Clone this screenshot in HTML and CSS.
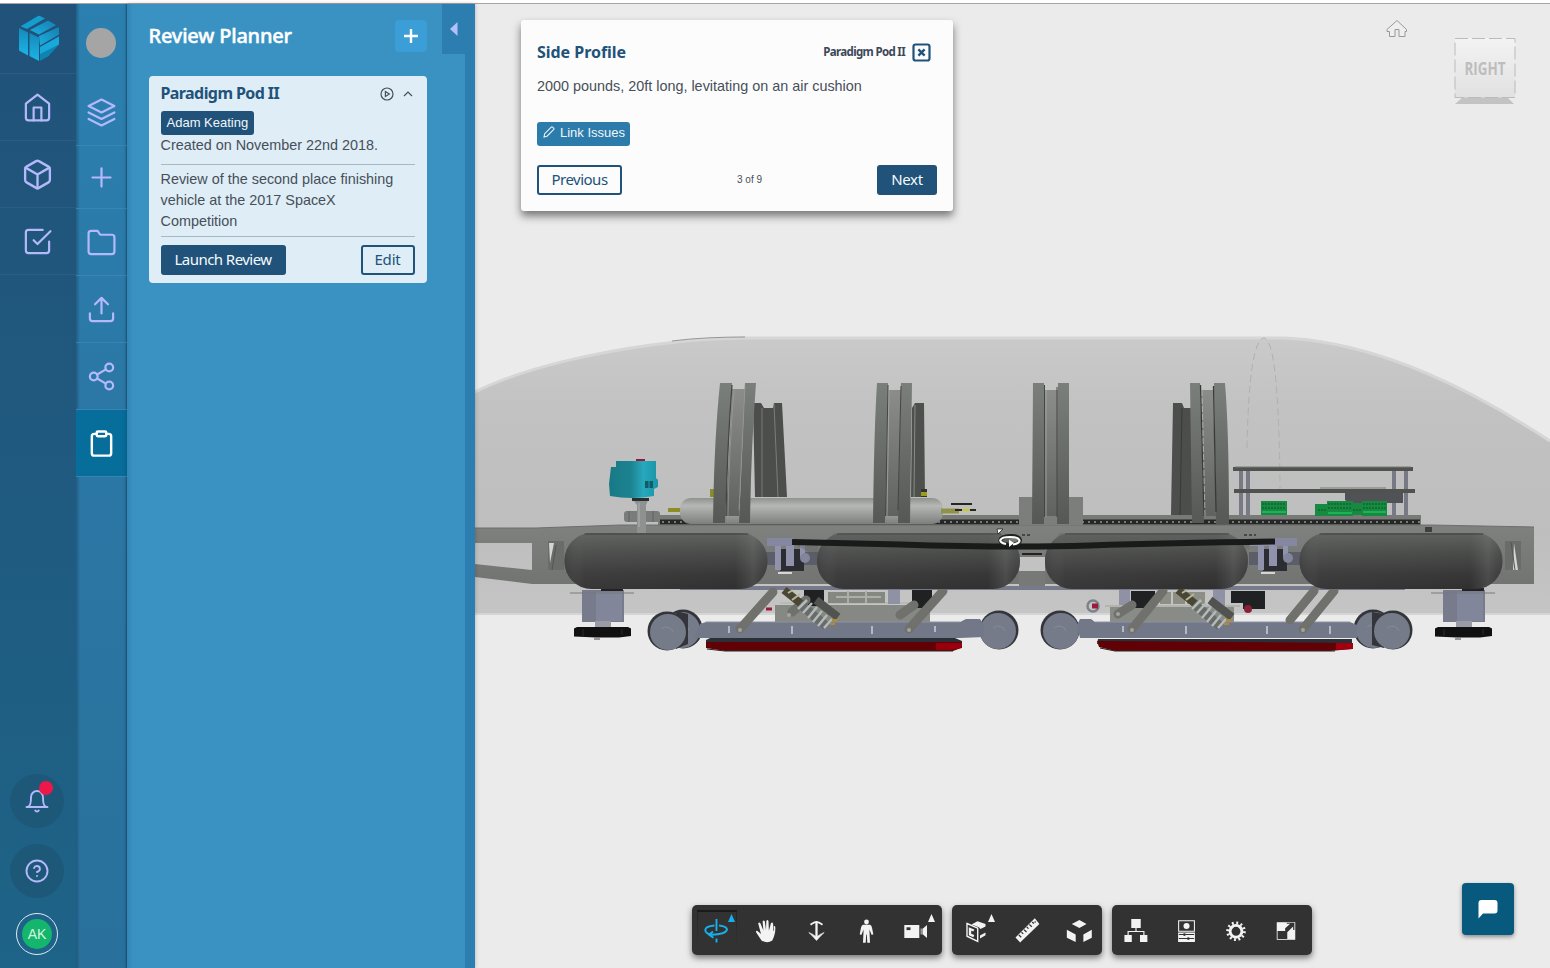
FILE: index.html
```html
<!DOCTYPE html>
<html lang="en">
<head>
<meta charset="utf-8">
<title>Review Planner</title>
<link rel="stylesheet" href="styles.css">
</head>
<body>
<div class="topline"></div>
<div class="app">
  <nav class="rail">
    <a class="logo">
      <svg width="42" height="47" viewBox="0 0 42 47">
        <defs>
          <linearGradient id="lg1" x1="0" y1="1" x2="1" y2="0"><stop offset="0" stop-color="#1caee0"/><stop offset="1" stop-color="#1380b0"/></linearGradient>
          <linearGradient id="lg2" x1="0" y1="0" x2="0" y2="1"><stop offset="0" stop-color="#1589b8"/><stop offset="1" stop-color="#1bb5e8"/></linearGradient>
        </defs>
        <path d="M3 11L20 1Q21 .5 22 1L27 3.500 9 14 3 11.500Z" fill="#159dcd"/>
        <path d="M12 15L30 5.500L38 10L21 19.500Z" fill="url(#lg1)"/>
        <path d="M1 13L10 17.500V40.500L1 35.500Z" fill="url(#lg2)"/>
        <path d="M11.500 18L21 22.500V46L11.500 41Z" fill="url(#lg2)"/>
        <path d="M21 21L41 12V19.500L22 30.500Z" fill="url(#lg1)"/>
        <path d="M22 32L41 21.500V29.500L31 38V40.500L22 45.500Z" fill="#18a9da"/>
        <path d="M22 39L41 29.500L31 40.500L22 45.500Z" fill="#0e84b2"/>
      </svg>
    </a>
    <a class="cell"><svg class="ic" viewBox="0 0 24 24"><path d="M3 9l9-7 9 7v11a2 2 0 0 1-2 2H5a2 2 0 0 1-2-2z"/><path d="M9 22V12h6v10"/></svg></a>
    <a class="cell"><svg class="ic big" viewBox="0 0 24 24"><path d="M21 16V8a2 2 0 0 0-1-1.730l-7-4a2 2 0 0 0-2 0l-7 4A2 2 0 0 0 3 8v8a2 2 0 0 0 1 1.730l7 4a2 2 0 0 0 2 0l7-4A2 2 0 0 0 21 16z"/><path d="M3.300 7L12 12l8.700-5M12 22V12"/></svg></a>
    <a class="cell"><svg class="ic" viewBox="0 0 24 24"><path d="M9 11l3 3L22 4"/><path d="M21 12v7a2 2 0 0 1-2 2H5a2 2 0 0 1-2-2V5a2 2 0 0 1 2-2h11"/></svg></a>
    <div class="rail-foot">
      <a class="round"><svg class="ic small" viewBox="0 0 24 24"><path d="M18 8A6 6 0 0 0 6 8c0 7-1 9-2.500 9.500M18 8c0 7 1 9 2.500 9.500M1.500 18h21M13.730 21.500a2 2 0 0 1-3.460 0"/></svg><i class="dot"></i></a>
      <a class="round"><svg class="ic small" viewBox="0 0 24 24"><circle cx="12" cy="12" r="10.500"/><path d="M9.090 9a3 3 0 0 1 5.830 1c0 2-3 3-3 3M12 17h.01"/></svg></a>
      <a class="avatar"><span>AK</span></a>
    </div>
  </nav>

  <nav class="tools">
    <a class="t-avatar"><i></i></a>
    <a class="t-cell"><svg class="ic" viewBox="0 0 24 24"><path d="M12 2L2 7l10 5 10-5-10-5zM2 17l10 5 10-5M2 12l10 5 10-5"/></svg></a>
    <a class="t-cell short"><svg class="ic" viewBox="0 0 24 24"><path d="M12 5v14M5 12h14"/></svg></a>
    <a class="t-cell"><svg class="ic" viewBox="0 0 24 24"><path d="M22 19a2 2 0 0 1-2 2H4a2 2 0 0 1-2-2V5a2 2 0 0 1 2-2h5l2 3h9a2 2 0 0 1 2 2z"/></svg></a>
    <a class="t-cell"><svg class="ic" viewBox="0 0 24 24"><path d="M21 15v4a2 2 0 0 1-2 2H5a2 2 0 0 1-2-2v-4M17 8l-5-5-5 5M12 3v12"/></svg></a>
    <a class="t-cell"><svg class="ic" viewBox="0 0 24 24"><circle cx="18" cy="5" r="3"/><circle cx="6" cy="12" r="3"/><circle cx="18" cy="19" r="3"/><path d="M8.590 13.510l6.830 3.980M15.410 6.510l-6.820 3.980"/></svg></a>
    <a class="t-cell active"><svg class="ic" viewBox="0 0 24 24"><path d="M16 4h2a2 2 0 0 1 2 2v14a2 2 0 0 1-2 2H6a2 2 0 0 1-2-2V6a2 2 0 0 1 2-2h2"/><rect x="8" y="2" width="8" height="4" rx="1"/></svg></a>
  </nav>

  <section class="panel">
    <div class="panel-main">
      <header class="panel-head">
        <h1>Review Planner</h1>
        <button class="add"><svg width="14" height="14" viewBox="0 0 14 14"><path d="M7 0v14M0 7h14" stroke="#fff" stroke-width="2.400"/></svg></button>
      </header>
      <article class="card">
        <div class="card-head">
          <h2>Paradigm Pod II</h2>
          <svg width="14" height="14" viewBox="0 0 14 14" class="line"><circle cx="7" cy="7" r="6"/><path d="M5.400 4.600L9.300 7 5.400 9.400z"/></svg>
          <svg width="10" height="6" viewBox="0 0 10 6" class="line"><path d="M1 5l4-4 4 4"/></svg>
        </div>
        <span class="chip">Adam Keating</span>
        <p class="created">Created on November 22nd 2018.</p>
        <p class="desc">Review of the second place finishing vehicle at the 2017 SpaceX Competition</p>
        <div class="card-foot">
          <button class="btn solid launch">Launch Review</button>
          <button class="btn outline edit">Edit</button>
        </div>
      </article>
    </div>
    <div class="panel-edge"></div>
    <a class="collapse"><svg width="8" height="14" viewBox="0 0 8 14"><path d="M7.500 0v14L0 7z" fill="#b3c0fb"/></svg></a>
  </section>

  <main class="viewer">
    <svg class="scene" viewBox="475 4 1075 964" width="1075" height="964">
      <defs>
        <linearGradient id="shell" x1="0" y1="0" x2="0" y2="1"><stop offset="0" stop-color="#cacaca"/><stop offset=".25" stop-color="#c2c2c2"/><stop offset=".7" stop-color="#bebebe"/><stop offset="1" stop-color="#c5c5c5"/></linearGradient>
        <linearGradient id="frame" x1="0" y1="0" x2="0" y2="1"><stop offset="0" stop-color="#7e817e"/><stop offset="1" stop-color="#727472"/></linearGradient>
        <linearGradient id="tank" x1="0" y1="0" x2="0" y2="1"><stop offset="0" stop-color="#5f625f"/><stop offset=".35" stop-color="#4a4c4a"/><stop offset=".7" stop-color="#393939"/><stop offset="1" stop-color="#303030"/></linearGradient>
        <linearGradient id="tankEnd"><stop offset="0" stop-color="#444" stop-opacity=".4"/><stop offset=".1" stop-color="#888" stop-opacity=".08"/><stop offset=".84" stop-color="#888" stop-opacity="0"/><stop offset=".93" stop-color="#909090" stop-opacity=".24"/><stop offset="1" stop-color="#555" stop-opacity=".15"/></linearGradient>
        <linearGradient id="bottle" x1="0" y1="0" x2="0" y2="1"><stop offset="0" stop-color="#8f928f"/><stop offset=".3" stop-color="#b5b8b5"/><stop offset="1" stop-color="#7d7f7d"/></linearGradient>
        <linearGradient id="flange" x1="0" y1="0" x2="0" y2="1"><stop offset="0" stop-color="#7b7f7c"/><stop offset="1" stop-color="#555855"/></linearGradient>
        <linearGradient id="web" x1="0" y1="0" x2="0" y2="1"><stop offset="0" stop-color="#8a8d8a"/><stop offset="1" stop-color="#5f625f"/></linearGradient>
        <linearGradient id="teal"><stop offset="0" stop-color="#177985"/><stop offset=".45" stop-color="#1d8391"/><stop offset=".7" stop-color="#27a9bd"/><stop offset="1" stop-color="#1b93a6"/></linearGradient>
        <linearGradient id="cube" x1="0" y1="0" x2="0" y2="1"><stop offset="0" stop-color="#f3f3f3"/><stop offset="1" stop-color="#e1e1e1"/></linearGradient>
        <g id="vessel"><rect width="203" height="56" rx="27" fill="url(#tank)"/><rect width="203" height="56" rx="27" fill="url(#tankEnd)"/><path d="M20 1H184" stroke="#3d403d" stroke-width="1"/></g>
        <g id="spring">
          <path d="M0 0L20 16" stroke="#4a4633" stroke-width="8"/>
          <path d="M4 3l5-3M8 10l8-6" stroke="#b5b99a" stroke-width="2"/>
          <path d="M32 10L54 27" stroke="#515351" stroke-width="8"/>
          <path d="M16 14L42 36" stroke="#686b69" stroke-width="9"/>
          <path d="M14 19l9-9M19 23l9-10M24 28l9-11M29 32l9-11M34 36l9-11M40 38l8-9" stroke="#b3bbb9" stroke-width="2.500"/>
          <path d="M48 30h6M46 34h5" stroke="#b68b25" stroke-width="2"/>
        </g>
        <g id="valve">
          <rect x="0" y="17" width="52" height="13" fill="#5b5d68"/>
          <rect x="14" y="14" width="24" height="22" fill="#2c2d33"/>
          <path d="M1 5l26-2v8H1z" fill="#8d8fa6"/>
          <path d="M20 8h8v23h-8zM9 10h6v25h-6zM34 10h5v12h-5z" fill="#9193ac"/>
          <circle cx="39" cy="23" r="5" fill="#83859c"/>
          <path d="M12 38h14" stroke="#d5d5d5" stroke-width="2"/>
        </g>
        <g id="foot">
          <path d="M8 2h42v32H8z" fill="#777b8c"/><path d="M22 4h26v29H22z" fill="#82869a"/>
          <path d="M-4 5H60" stroke="#777a80"/><path d="M27 0h22v3H27z" fill="#222"/>
          <path d="M21 33h16v6H21z" fill="#999ba5"/>
          <path d="M0 40.500L3 39H54L57 40.500V48L45 49.500H22L0 48.500Z" fill="#111"/><path d="M9 41v7M48 41v6" stroke="#2d2d2d"/><path d="M20 51h6" stroke="#444"/>
        </g>
        <g id="wheel"><circle r="19.500" fill="#33353a"/><circle cx="1" cy="1" r="18" fill="#767b89"/><path d="M-6-2a7 6 0 0 1 12 3" fill="none" stroke="#868b99"/></g>
        <g id="wheelR"><circle r="19.500" fill="#33353a"/><circle cx="-1" cy="1" r="18" fill="#767b89"/><path d="M-6-2a7 6 0 0 1 12 3" fill="none" stroke="#868b99"/></g>
      </defs>

      <!-- outer shell -->
      <path d="M475 391C535 361 650 338 745 337H1285C1385 342 1480 394 1550 440V615H475Z" fill="url(#shell)"/>
      <path d="M475 392C535 362 650 339 745 338H1285C1385 343 1480 395 1550 441" fill="none" stroke="#d6d6d6" stroke-width="3"/>
      <path d="M672 341C695 338 720 337 745 337" fill="none" stroke="#959895"/>
      <path d="M475 614H1550" stroke="#d5d5d5" stroke-width="2"/>
      <path d="M1247 448Q1249 340 1264 338Q1279 340 1280 490" fill="none" stroke="#b0b0b0" stroke-dasharray="7 4"/>

      <!-- deck -->
      <rect x="658" y="515" width="763" height="10" fill="#777a77"/>
      <path d="M660 522H1420" stroke="#252625" stroke-width="5"/>
      <path d="M662 522H1420" stroke="#777a77" stroke-width="2" stroke-dasharray="2 4"/>
      <path d="M475 528L536 528L620 525H1430L1534 527V584H532L475 577V564L532 570V543H475Z" fill="url(#frame)"/>
      <path d="M475 528L536 528 620 525H1430L1534 527" fill="none" stroke="#6c6f6c"/>
      <path d="M548 541h16v29h-16zM1505 541h16v29h-16z" fill="#6a6c69"/>
      <path d="M549 543h5l-4 20zM1514 543l4 27h-5z" fill="#d4d4d4"/>
      <path d="M552 570l4-25M1511 542l4 28" stroke="#555"/>
      <rect x="1019" y="557" width="26" height="14" fill="#c2c2c2"/>
      <rect x="1019" y="571" width="26" height="16" fill="#777977"/>
      <rect x="680" y="586" width="725" height="4" fill="#777a8b"/>
      <path d="M1022 554h20" stroke="#222" stroke-width="2"/>
      <rect x="1425" y="527" width="7" height="5" fill="#3e403e"/>

      <!-- rear hoops -->
      <path d="M753 403L761 403 764 408H773L774 403H782L787 497H755Z" fill="#4b4e4b"/>
      <path d="M762 408V497M774 404L778 497" stroke="#8f918f" stroke-width=".7"/>
      <path d="M912 408L915 403H924L925 497H911Z" fill="#4d504d"/><path d="M915 405L914 497" stroke="#888b88"/>
      <path d="M1173 403H1182L1184 408H1192V515H1171Z" fill="#4b4e4b"/><path d="M1182 408L1180 515" stroke="#383a38"/>

      <!-- air bottle -->
      <rect x="680" y="498" width="263" height="26" rx="11" fill="url(#bottle)"/>
      <path d="M668 510h12M712 497v-8" stroke="#8b8d27" stroke-width="4"/>
      <path d="M924 497v-8" stroke="#333" stroke-width="6"/><path d="M924 496v-4" stroke="#9a9d1e" stroke-width="6"/>
      <path d="M941 511h18" stroke="#90924a" stroke-width="5"/><path d="M951 504h21M955 510h21" stroke="#252525" stroke-width="2"/><path d="M962 510h8" stroke="#c8cc26" stroke-width="2"/>
      <rect x="1019" y="497" width="64" height="28" fill="#7b7e7b"/>

      <!-- front hoops -->
      <path d="M732 389H745L739 516H726Z" fill="url(#web)"/>
      <path d="M720 383H732Q728 450 725 523H713Q714 440 720 383ZM745 383H756Q751 450 750 523H739Z" fill="url(#flange)"/>
      <path d="M732 385Q727 450 726 516" fill="none" stroke="#444644" stroke-width="1.300"/><path d="M734 390Q729 450 728 516M745 385L739 510" fill="none" stroke="#a0a2a0" stroke-width=".6"/>
      <path d="M888 390H901L899 516H885Z" fill="url(#web)"/>
      <path d="M877 383H888L885 523H873Q874 430 877 383ZM901 383H912L910 523H898Z" fill="url(#flange)"/>
      <path d="M888 385L885.500 516M901 386L898 510" stroke="#444644"/><path d="M889 390L887 516" stroke="#b0b0b0" stroke-width=".7"/>
      <rect x="1045" y="390" width="13" height="126" fill="url(#web)"/>
      <path d="M1033 383H1044V524H1032ZM1058 383H1069V524H1057Z" fill="url(#flange)"/>
      <path d="M1044.500 385V517M1057 387V517" stroke="#444644"/><path d="M1046 390V517" stroke="#b0b0b0" stroke-width=".7"/>
      <path d="M1201 390H1213L1216 516H1204Z" fill="url(#web)"/>
      <path d="M1190 383H1200L1204 523H1192ZM1214 383H1225Q1229 430 1229 524H1216Z" fill="url(#flange)"/>
      <path d="M1200.500 385L1204 516M1213.500 386L1216 512" stroke="#383a38" stroke-width="1.300"/><path d="M1202 390L1205 516" stroke="#b8b8b8" stroke-width=".8" stroke-dasharray="6 2"/>

      <!-- sensor head -->
      <rect x="624" y="511" width="36" height="11" rx="3" fill="#797c7b"/><path d="M629 511v11M653 511v11" stroke="#5f6261"/>
      <path d="M633 500h15l-2 5v29h-9v-29z" fill="#8e918f"/><path d="M639 503v24" stroke="#b0b2b0"/><path d="M632 498h17v3h-17z" fill="#26302f"/>
      <path d="M616 461H656V478L658 480V487L654 489V496Q632 500 610 496L609 484 611 467H616Z" fill="url(#teal)"/><path d="M645 481h8v7h-8z" fill="#105c68"/><path d="M649 481v7" stroke="#1c8796" stroke-width="1.500"/><path d="M636 460h9" stroke="#8f1b35" stroke-width="2"/>

      <!-- electronics shelf -->
      <path d="M1239 468h4v48h-4zM1246 468h4v48h-4zM1392 470h4v46h-4zM1404 468h4v48h-4z" fill="#777985"/>
      <path d="M1345 491h58v12h-54l-4-3z" fill="#505255"/>
      <path d="M1233 469H1413M1234 491H1415" stroke="#50524f" stroke-width="4"/><path d="M1235 467H1411M1320 488h66" stroke="#777a77"/>
      <path d="M1261 501h26v14h-26zM1315 504h20v12h-20zM1327 501h26v15h-26zM1362 501h25v15h-25zM1352 503h10v12h-10z" fill="#168a40"/>
      <path d="M1262 504h24M1262 508h24M1328 504h24M1328 508h24M1363 504h23M1363 508h23M1318 510h8M1353 510h8" stroke="#0d5429" stroke-width="1.200" stroke-dasharray="2 1"/>
      <path d="M1262 512h24M1328 513h24M1363 512h23" stroke="#20c05c" stroke-width="1.500"/>

      <!-- suspension behind the beams -->
      <g>
        <path d="M775 605h155v17H775z" fill="#858883"/><path d="M780 603h150" stroke="#b8bab5" stroke-width="2"/>
        <path d="M804 590h20v16h-20zM912 590h20v18h-20z" fill="#202123"/><path d="M888 590h12v14h-12z" fill="#8f91a5"/>
        <path d="M828 592h57v11h-57z" fill="#858781"/><path d="M836 597h45M848 591v12M866 591v12" stroke="#aeaea7" stroke-width="2"/>
      </g>
      <g>
        <path d="M1110 605h124v17H1110z" fill="#888b86"/><path d="M1105 606h135" stroke="#b2b4af" stroke-width="2"/>
        <path d="M1119 590h11v15h-11zM1213 590h12v16h-12z" fill="#8f91a5"/><path d="M1131 591h24v17h-24zM1231 591h12v12h-12zM1243 591h22v18h-22z" fill="#202123"/>
        <path d="M1160 592h45v12h-45z" fill="#8d8f87"/><path d="M1172 592v12M1186 592v12" stroke="#c4c4bd" stroke-width="2"/>
        <circle cx="1093" cy="606" r="5.500" fill="none" stroke="#78838b" stroke-width="2.500"/><path d="M1092 606h6" stroke="#9c1d3b" stroke-width="5"/><circle cx="1248" cy="609" r="4" fill="#8a2038"/>
      </g>

      <!-- carriages -->
      <use href="#wheelR" x="683" y="629"/><path d="M676 611l12 3v30l-12 5z" fill="#33353a"/><use href="#wheel" x="667" y="631"/><use href="#wheelR" x="999" y="630"/>
      <path d="M700 624L706 622H960L966 619H980L984 625V637L960 638H706L694 638Z" fill="#737889"/>
      <path d="M706 622H960" stroke="#8d92a3"/>
      <path d="M710 638H955L962 641V644H706V640Z" fill="#2b2f38"/><path d="M706 642H961V648L953 651H725L706 648Z" fill="#620105"/><path d="M936 643h26v5l-10 2h-16z" fill="#99000d"/><path d="M707 649L725 651H953" fill="none" stroke="#2a2927"/>
      <use href="#wheel" x="1060" y="630"/><use href="#wheel" x="1373" y="629"/><path d="M1372 612l12 2v34l-12-3z" fill="#33353a"/><use href="#wheelR" x="1393" y="630"/>
      <path d="M1077 625L1080 619H1091L1095 622H1350L1357 625V638H1080Z" fill="#737889"/>
      <path d="M1095 622H1350" stroke="#8d92a3"/>
      <path d="M1098 639H1352V644H1097Z" fill="#2b2f38"/><path d="M1097 641L1352 643V649L1330 651H1115L1099 647Z" fill="#620105"/><path d="M1336 643h17v6l-17 1z" fill="#a3000f"/><path d="M1100 648L1115 651H1335" fill="none" stroke="#2a2927"/>
      <path d="M792 626v8M872 626v8M935 626v6M729 626v7M1123 626v6M1186 626v8M1267 626v8M1330 626v8" stroke="#b5b8c6" stroke-width="2"/>
      <g stroke="#70716c" stroke-width="9" stroke-linecap="round"><path d="M773 592L740 629M792 612l14-12M943 591L909 629M900 615l14-10M1163 591L1132 629M1118 614l14-9M1314 591L1290 620M1334 591L1303 629"/></g>
      <g fill="#a2a39a"><circle cx="740" cy="630" r="2"/><circle cx="909" cy="630" r="2"/><circle cx="1132" cy="630" r="2"/><circle cx="1303" cy="630" r="2"/><circle cx="789" cy="615" r="2"/><circle cx="1118" cy="614" r="2"/></g>
      <use href="#spring" x="784" y="590"/><use href="#spring" x="1178" y="590"/>
      <path d="M766 609h6" stroke="#9b193a" stroke-width="3"/>
      <use href="#foot" x="574" y="588"/><use href="#foot" x="1435" y="588"/>

      <!-- pressure vessels and hose -->
      <use href="#valve" x="766" y="535"/><use href="#valve" x="1249" y="535"/>
      <use href="#vessel" x="564.500" y="533"/><use href="#vessel" x="817" y="533"/><use href="#vessel" x="1045" y="533"/><use href="#vessel" x="1299.500" y="533"/>
      <path d="M818 557V547L835 533H1000L1019 550H1045L1060 533H1228L1249 550V543L792 543Z" fill="#5b5e5b" opacity=".35"/>
      <path d="M792 542L900 544.500Q1010 548 1090 545.500T1275 541.500" fill="none" stroke="#191a1a" stroke-width="6"/>
      <path d="M767 538h25v8h-25zM1275 538h22v8h-22z" fill="#8587a0"/>
      <path d="M1022 535h10M1244 535h12" stroke="#454745" stroke-width="2" stroke-dasharray="3 2"/>

      <!-- orbit pointer -->
      <path d="M997 529h6l-5 5z" fill="#fff" stroke="#222" stroke-width=".8"/>
      <g fill="none"><path d="M1008 544.500c-11-1-10-8 2-8.500s13 7 4 8.500" stroke="#222" stroke-width="4"/><path d="M1006 544c-9-2-7-7 4-7s13 6 3 7.500" stroke="#fff" stroke-width="2.200"/></g><path d="M1009 539.500v7.500l5-4z" fill="#fff"/>

      <!-- view cube -->
      <path d="M1387 29.500L1397 20.500L1406.500 29.500V31.500H1405V36.500H1399V29.500H1395V36.500H1389.500V31.500H1387Z" fill="#eee" stroke="#999"/>
      <path d="M1455 104L1463 97H1507L1514 104Z" fill="#c3c3c3"/>
      <rect x="1455" y="38" width="60" height="59.500" fill="url(#cube)"/>
      <rect x="1455" y="38.500" width="60" height="59" fill="none" stroke="#bbb" stroke-dasharray="13 4"/>
      <text x="1464.500" y="75" class="cube-label" textLength="41" lengthAdjust="spacingAndGlyphs">RIGHT</text>
    </svg>

    <section class="step">
      <header class="step-head">
        <h2>Side Profile</h2>
        <span class="step-ref">Paradigm Pod II</span>
        <svg width="19" height="19" viewBox="0 0 19 19"><rect x="1.500" y="1.500" width="16" height="16" rx="2" fill="none" stroke="#21527a" stroke-width="2.200"/><path d="M6.400 6.400l6.200 6.200M12.600 6.400l-6.200 6.200" stroke="#21527a" stroke-width="2.400"/></svg>
      </header>
      <p class="step-text">2000 pounds, 20ft long, levitating on an air cushion</p>
      <span class="chip link"><svg width="12" height="12" viewBox="0 0 12 12"><path d="M1 11l.7-3.300L8.200 1.200a1 1 0 0 1 1.400 0l1 1a1 1 0 0 1 0 1.400L4 10.200z" fill="none" stroke="#e6f3fb" stroke-width="1.100"/></svg>Link Issues</span>
      <footer class="step-foot">
        <button class="btn outline prev">Previous</button>
        <span class="count">3 of 9</span>
        <button class="btn solid next">Next</button>
      </footer>
    </section>

    <div class="dock">
      <div class="group">
        <a class="tool on"><svg viewBox="0 0 50 50"><g fill="none" stroke="#16b0ee" stroke-width="1.900"><path d="M22.500 20.500c-13 1-11 8-2 9.500M27 20.500c12 1 11 8.500-7 9.300M24.500 14v12M24.500 33.500v4"/><path d="M21 26.500l-4 3.200 4.500 3"/></g><path d="M36 17l3.500-8 3.500 8z" fill="#16b0ee"/></svg></a>
        <a class="tool"><svg viewBox="0 0 50 50"><path d="M19.500 35.500L14.200 27.500q-.8-2 1.300-1.600l3.500 3-2.800-10.400q.8-1.700 2.200-.3l3 7.300-.8-9q1-2 2.200-.3l1.200 9 .3-9.300q1.100-1.700 2.200 0l.4 9.800 2-7.500q1.300-1.700 2.200.2L31.500 26.500c1-1.500.5-3 .2-5q1.300-1.500 1.600.8c.3 5-1 9-3 13.200q-5 3.500-10.800 0z"/></svg></a>
        <a class="tool"><svg viewBox="0 0 50 50"><g fill="none" stroke="#f3f3f3"><path d="M24.500 17v16" stroke-width="2.300"/><path d="M18.500 19.800q4-3 6-3t6 3" stroke-width="1.800"/></g><path d="M16.800 27.500q4.200 1.500 7.700 4.500q3.500-3 7.700-4.500-3.200 2.800-7.700 8-4.500-5.200-7.700-8z" stroke="#f3f3f3" stroke-width=".6"/></svg></a>
        <a class="tool"><svg viewBox="0 0 50 50"><circle cx="24.500" cy="17" r="2.400"/><path d="M21 19.800h7q1.600.4 2 3l1.300 6.500-1.600.7-2.300-5.500.6 13.200h-2.700L24.800 29.500h-.6L23.700 37.700H21l.6-13.200-2.300 5.500-1.600-.7L19 22.800q.4-2.600 2-3z"/></svg></a>
        <a class="tool"><svg viewBox="0 0 50 50"><path d="M12.300 20h15v13h-15z"/><path d="M14.500 22.300h4v2.800h-4z" fill="#333"/><path d="M28.500 23.500h3v6h-3z" fill="#999"/><path d="M31 23.500l4-3.500v13l-4-3.500z"/><path d="M36 17l3.500-8 3.500 8z"/></svg></a>
      </div>
      <div class="group">
        <a class="tool"><svg viewBox="0 0 50 50"><g fill="none" stroke="#f3f3f3" stroke-width="1.400"><path d="M15 18.500l10.700 4.700v13.200L15 31.200z"/><path d="M21.800 25.500L18 24v5.500l3.800 1.700" stroke-width="2.400"/></g><path d="M19.500 19.500l6-3.200 8 2.700v2.500L28.500 24l-1.600-1.700zM28 30.500l5.500-3v2.800L28 33.500z"/><path d="M36 17l3.500-8 3.500 8z"/></svg></a>
        <a class="tool"><svg viewBox="0.500 0 47.500 50" preserveAspectRatio="none"><path d="M13.300 32.500L31.700 13.300l4.300 5.700L17.700 37.500z"/><path d="M16.500 30l2.300 2.200M19 27.300l1.700 1.600M21.500 24.800l2.300 2.200M24 22l1.700 1.700M26.500 19.500l2.300 2.200M29.200 17l1.600 1.500" stroke="#333" stroke-width="1.200"/><circle cx="32" cy="17" r=".8" fill="#333"/></svg></a>
        <a class="tool"><svg viewBox="-5.300 0 47.500 50" preserveAspectRatio="none"><path d="M13.500 19l7.200-4 6.800 4-6.800 4zM8.800 24.800l8.400 4.700v7.500l-8.400-4.200zM32.500 24.800l-8 4.700v7.500l8-4.200z"/></svg></a>
      </div>
      <div class="group">
        <a class="tool"><svg viewBox="-5.300 0 47.500 50" preserveAspectRatio="none"><path d="M13 14h9v9h-9zM6.500 30h7v7h-7zM21.300 30h7v7h-7z"/><path d="M17.500 23v3.500M10 30v-3.500h15V30" fill="none" stroke="#f3f3f3" stroke-width="1.100"/></svg></a>
        <a class="tool"><svg viewBox="-8 0 47.500 50" preserveAspectRatio="none"><path d="M7.800 15.800h15v10.500h-15z" fill="none" stroke="#f3f3f3"/><circle cx="15.300" cy="21" r="2.900"/><path d="M7.300 27.500h16v9.500h-16z"/><path d="M8 29.600h14.500M8 33.600h14.500" stroke="#333" stroke-width="1"/><circle cx="13.300" cy="29.600" r="1.300" fill="#333"/><circle cx="17" cy="33.600" r="1.300" fill="#333"/></svg></a>
        <a class="tool"><svg viewBox="-11.800 0 50 50"><circle cx="12.200" cy="26.300" r="5.900" fill="none" stroke="#f3f3f3" stroke-width="2.900"/><circle cx="12.200" cy="26.300" r="8.400" fill="none" stroke="#f3f3f3" stroke-width="2.800" stroke-dasharray="1.900 2.498"/></svg></a>
        <a class="tool"><svg viewBox="-12.500 0 47.500 50" preserveAspectRatio="none"><path d="M1.500 17.200h17.600v17.600H1.500z"/><path d="M2.300 26h8v8h-8zM9.500 23.300l4.800-4.500h-3.300v-1h7.300v7.300h-1.200v-3.500L11.500 27.200v6.800h-2z" fill="#333"/></svg></a>
      </div>
    </div>
    <a class="chat"><svg width="20" height="19" viewBox="0 0 20 19"><path d="M3.500 0h13a3 3 0 0 1 3 3v7.500a3 3 0 0 1-3 3H5L.5 18.500V3a3 3 0 0 1 3-3z" fill="#fff"/></svg></a>
  </main>
</div>
</body>
</html>
```
FILE: styles.css
```css
* { box-sizing: border-box; }
body { margin: 0; width: 1550px; height: 968px; overflow: hidden; background: #ebebeb; font-family: "Liberation Sans", Arial, sans-serif; color: #474f59; }
h1, h2, p { margin: 0; }
button { font: inherit; padding: 0; border: 0; display: flex; align-items: center; justify-content: center; }
svg { display: block; flex: none; }
.topline { height: 4px; background: #fff; border-bottom: 1px solid #aaa5a5; }
.app { display: flex; height: 964px; }

.ic { width: 31px; height: 31px; fill: none; stroke: #b3b9fa; stroke-width: 1.700; stroke-linecap: round; stroke-linejoin: round; }
.ic.big { width: 33px; height: 33px; }
.ic.small { width: 24px; height: 24px; stroke-width: 1.900; }

.rail { width: 76px; display: flex; flex-direction: column; background: linear-gradient(#215279, #20587e 40%, #1e6488); }
.logo { height: 70px; display: flex; align-items: center; justify-content: center; padding-left: 2px; border-bottom: 1px solid #2c5d80; }
.cell { height: 67px; display: flex; align-items: center; justify-content: center; padding-right: 1px; border-bottom: 1px solid #2c5d80; }
.rail-foot { margin-top: auto; display: flex; flex-direction: column; align-items: center; padding: 0 2px 13px 0; }
.round { position: relative; width: 54px; height: 54px; border-radius: 50%; margin-bottom: 16px; background: #1d5878; display: flex; align-items: center; justify-content: center; }
.dot { position: absolute; left: 29px; top: 7px; width: 14px; height: 14px; border-radius: 50%; background: #ed1749; }
.avatar { width: 42px; height: 42px; margin-top: -1px; border: 1.500px solid #dcebf2; border-radius: 50%; display: flex; align-items: center; justify-content: center; }
.avatar span { width: 30px; height: 30px; border-radius: 50%; background: #14b56d; color: #d5f5df; font-size: 14px; line-height: 31px; text-align: center; }

.tools { width: 51px; background: linear-gradient(90deg, rgba(20,50,80,.4) 0, transparent 4px, transparent 49px, rgba(20,50,80,.45) 51px), linear-gradient(#2b80b0, #2b77a5 45%, #29719c); }
.t-avatar { height: 75px; display: flex; justify-content: center; padding: 24px 1px 0 0; }
.t-avatar i { width: 30px; height: 30px; border-radius: 50%; background: #a5a5a5; }
.t-cell { height: 67px; display: flex; align-items: center; justify-content: center; padding-right: 1px; border-bottom: 1px solid #3785b1; }
.t-cell.short { height: 63px; }
.t-cell.active { background: #076d9b; }
.t-cell.active .ic { stroke: #fff; stroke-width: 2; width: 29px; height: 29px; }

.panel { position: relative; width: 348px; display: flex; background: #3a92c3; box-shadow: 0 0 4px rgba(0,0,0,.25); z-index: 1; }
.panel-main { width: 338px; padding: 16px 38.500px 0 21.500px; background: linear-gradient(90deg, #3284b3, #3a92c3 6px); }
.panel-edge { width: 10px; background: #2b7eaf; }
.collapse { position: absolute; right: 0; top: 0; width: 33px; height: 50px; background: #2b7eaf; padding: 18px 0 0 8px; }
.panel-head { display: flex; justify-content: space-between; height: 56px; }
.panel-head h1 { font: 500 20px/31px "Noto Sans", sans-serif; color: #fff; letter-spacing: -.2px; -webkit-text-stroke: .45px #fff; }
.add { width: 32px; height: 32px; border-radius: 4px; background: #3b9ed6; }
.card { height: 207px; border-radius: 4px; background: #deedf6; padding: 7px 12px 0; }
.card-head { display: flex; align-items: center; height: 21px; gap: 9px; padding-right: 2px; margin-bottom: 7px; }
.card-head h2 { flex: 1; font: 700 16px/21px "Noto Sans", sans-serif; color: #21527a; letter-spacing: -.58px; }
.line { fill: none; stroke: #46505c; stroke-width: 1.200; }
.chip { display: inline-flex; align-items: center; height: 24px; padding: 0 6px 2px; border-radius: 3px; background: #215279; color: #f0f6fa; font-size: 13px; }
.created { font-size: 14.400px; line-height: 21px; height: 30px; border-bottom: 1px solid #a7b8c5; }
.desc { font-size: 14.400px; line-height: 21px; padding: 4px 0 5px; height: 72px; border-bottom: 1px solid #a7b8c5; }
.card-foot { display: flex; justify-content: space-between; padding-top: 8px; }
.btn { height: 30px; border-radius: 3px; font: 400 15px/26px "Noto Sans", sans-serif; padding-bottom: 2px; white-space: nowrap; }
.solid { background: #215279; color: #f5fafd; }
.outline { background: transparent; border: 2px solid #215279; color: #21527a; }
.launch { width: 125px; letter-spacing: -.55px; }
.edit { width: 54px; letter-spacing: -.2px; }

.viewer { position: relative; width: 1075px; height: 964px; overflow: hidden; }
.cube-label { font: 700 18px "Open Sans", sans-serif; fill: #bdbdbd; }
.step { position: absolute; left: 46px; top: 16px; width: 432px; height: 191px; padding: 16px; background: #fcfcfc; border-radius: 3px; box-shadow: 0 5px 9px rgba(0,0,0,.5); }
.step-head { display: flex; align-items: center; height: 32px; padding-right: 6px; }
.step-head h2 { flex: 1; font: 700 16px/32px "Noto Sans", sans-serif; color: #21527a; letter-spacing: -.03px; }
.step-ref { font: 700 11.500px/32px "Noto Sans", sans-serif; color: #3c4859; margin-right: 7px; letter-spacing: -.66px; }
.step-text { font-size: 14.400px; line-height: 21px; margin: 7px 0 27px; height: 22px; padding-top: 1px; }
.chip.link { background: #2c7cab; gap: 5px; padding: 0 5px 3px 6px; margin-top: -6px; }
.step-foot { display: flex; align-items: center; justify-content: space-between; position: absolute; left: 16px; right: 16px; bottom: 16px; }
.prev { width: 85px; letter-spacing: -.5px; }
.next { width: 60px; letter-spacing: -.4px; }
.count { font-size: 10px; padding-bottom: 2px; }

.dock { position: absolute; left: 217px; bottom: 13px; display: flex; gap: 10px; }
.group { display: flex; height: 50px; border-radius: 5px; background: #323232; box-shadow: 0 3px 6px rgba(0,0,0,.5); }
.tool { width: 50px; height: 50px; }
.tool svg { width: 50px; height: 50px; fill: #f3f3f3; }
.tool.on { background: linear-gradient(#1b1b1b, #1b1b1b) 5px 5px / 40px 2px no-repeat, linear-gradient(#252525, #323232) 5px 5px / 1px 35px no-repeat, linear-gradient(#252525, #323232) 44px 5px / 1px 35px no-repeat; }
.chat { position: absolute; right: 36px; bottom: 33px; width: 52px; height: 52px; border-radius: 4px; background: #075a7e; display: flex; align-items: center; justify-content: center; box-shadow: 0 2px 4px rgba(0,0,0,.4); }
```
